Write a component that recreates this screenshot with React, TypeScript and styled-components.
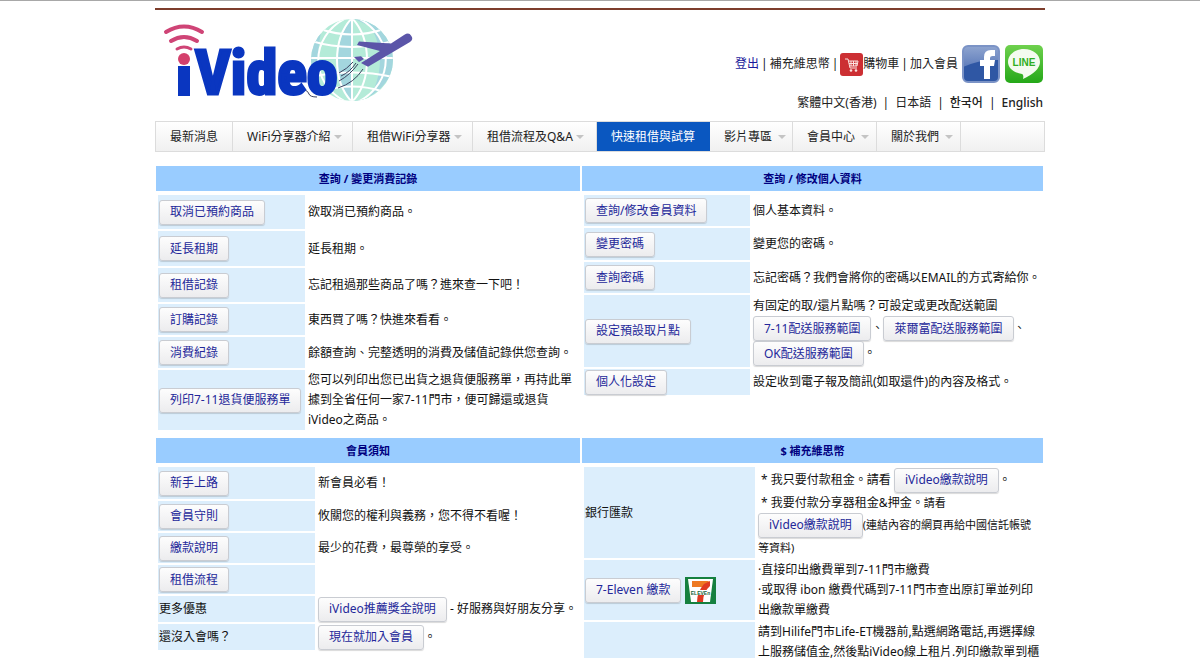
import React from "react";
import styled, { createGlobalStyle } from "styled-components";

const GlobalStyle = createGlobalStyle`
  * { box-sizing: border-box; }
  body {
    margin: 0;
    background: #fff;
    color: #111;
    font-family: "Noto Sans", "Noto Sans CJK TC", sans-serif;
    font-size: 12px;
    line-height: 20px;
  }
`;

const Page = styled.div`
  border-top: 1px solid #a8a8a8;
  padding-top: 7px;
`;

const Container = styled.div`
  max-width: 890px;
  margin: 0 auto;
`;

const Header = styled.header`
  display: flex;
  justify-content: space-between;
  border-top: 2px solid #7d3d2c;
  padding: 6px 2px 8px 5px;
`;

const LogoLink = styled.a`
  display: block;
  height: 90px;
`;

const LogoSvg = styled.svg`
  overflow: visible;
`;

const HeaderLinks = styled.div`
  display: flex;
  flex-direction: column;
  align-items: flex-end;
  gap: 10px;
  padding-top: 29px;
`;

const LinkLine = styled.div<{ $gap: number }>`
  display: flex;
  align-items: center;
  gap: ${(p) => p.$gap}px;
  line-height: 20px;
`;

const TopLink = styled.a<{ $accent?: boolean; $strong?: boolean }>`
  display: inline-flex;
  align-items: center;
  color: ${(p) => (p.$accent ? "#1a1a9c" : "#222")};
  font-weight: ${(p) => (p.$strong ? 500 : 400)};
  text-decoration: none;
`;

const Social = styled.div`
  display: flex;
  gap: 5px;
  height: 38px;
  margin-left: 2px;
`;

const Nav = styled.nav`
  display: flex;
  height: 31px;
  border: 1px solid #dcdcdc;
  background: linear-gradient(#fff, #f0f0f0);
`;

const NavItem = styled.a<{ $width: number; $active?: boolean }>`
  display: flex;
  align-items: center;
  flex: 0 1 ${(p) => p.$width}px;
  gap: 3px;
  padding-left: 14px;
  border-right: 1px solid ${(p) => (p.$active ? "#0a57c0" : "#dcdcdc")};
  background: ${(p) => (p.$active ? "#0a57c0" : "transparent")};
  color: ${(p) => (p.$active ? "#fff" : "#1c1c1c")};
  line-height: 28px;
  text-decoration: none;
  white-space: nowrap;
`;

const Caret = styled.span<{ $spaced?: boolean }>`
  border: 4px solid transparent;
  border-top-color: #c4c4c4;
  border-bottom: 0;
  margin-left: ${(p) => (p.$spaced ? 3 : 0)}px;
`;

const Panels = styled.main`
  display: grid;
  grid-template-columns: 424fr 461fr;
  gap: 6px 2px;
  padding: 14px 2px 0 1px;
`;

const PanelTitle = styled.h2`
  margin: 0 0 2px;
  height: 25px;
  background: #99ccff;
  color: #000080;
  font-size: 11px;
  font-weight: 700;
  line-height: 26px;
  text-align: center;
`;

const Table = styled.table`
  width: 100%;
  table-layout: fixed;
  border-collapse: separate;
  border-spacing: 2px;
`;

const LabelCol = styled.col<{ $width: number }>`
  width: ${(p) => p.$width}px;
`;

const Row = styled.tr<{ $height: number }>`
  height: ${(p) => p.$height}px;
`;

const LabelCell = styled.th`
  padding: 0 1px;
  background: #dceefc;
  font-weight: 400;
  text-align: left;
  vertical-align: middle;
`;

const TextCell = styled.td`
  padding: 0 1px;
  vertical-align: middle;
  white-space: nowrap;
`;

const Button = styled.button`
  height: 25px;
  padding: 0 10px;
  border: 1px solid #c9ccd2;
  border-radius: 3px;
  background: linear-gradient(#fdfdfd, #ececee);
  box-shadow: 0 1px 1px rgba(0, 0, 0, 0.15);
  color: #24289a;
  font: inherit;
  line-height: 22px;
  white-space: nowrap;
  vertical-align: middle;
`;

const Group = styled.div`
  display: flex;
  align-items: center;
  gap: 4px;
`;

const Small = styled.span`
  font-size: 11px;
`;

const Logo = () => (
  <LogoSvg width="256" height="90" viewBox="160 15 256 90" role="img" aria-label="iVideo">
    <defs>
      <clipPath id="globe">
        <circle cx="352" cy="59" r="41" />
      </clipPath>
    </defs>
    <g clipPath="url(#globe)">
      <rect x="310" y="17" width="84" height="84" fill="#b4ebd8" />
      <path d="M352 17C336 30 331 84 352 101ZM326 17C315 40 316 80 326 101H304V17ZM352 17C368 34 374 80 352 101C372 100 394 80 394 59S376 17 352 17Z" fill="#a3d6de" />
      <path d="M370 25C384 46 383 78 368 98L352 101C368 82 370 40 352 17Z" fill="#b4ebd8" />
      <g fill="none" stroke="#fff" strokeWidth="2">
        <path d="M352 17V101M352 17C332 38 332 80 352 101M352 17C372 38 372 80 352 101M346 17C309 36 309 82 346 101M358 17C395 36 395 82 358 101" />
        <path d="M308 57H396M311 40Q352 52 393 40M320 28Q352 39 384 28M311 76Q352 67 393 76M320 91Q352 80 384 91" />
      </g>
    </g>
    <path d="M411 34.500Q414 38 410 41L368 65.700L361 62L380 50L357 44L359 40.500L391 42.500L404 34Q409 31 411 34.500ZM354 56L361 55.300L364 58L359 61Z" fill="#5b55a8" />
    <g fill="none" stroke="#3b4260" strokeWidth="1">
      <path d="M339 72Q347 68 353 61M339 80Q350 74 358 63M338 87Q354 82 363 68M341 75Q350 71 356 62M305 89Q308 90 309 93T317 96" />
    </g>
    <g fill="none" stroke="#cf4476" strokeLinecap="round">
      <path d="M166 31Q184 20 202 31" strokeWidth="4" />
      <path d="M171 40Q184 32 197 40" strokeWidth="4" />
      <path d="M177 48Q184 44 191 48" strokeWidth="3" />
    </g>
    <circle cx="184" cy="58" r="6" fill="#d4416c" />
    <path d="M178 65H190V95H178Z" fill="#0a36c0" />
    <text
      x="195"
      y="93"
      fontFamily='"Liberation Sans Narrow", "Roboto Condensed", sans-serif'
      fontWeight="700"
      fontSize="62"
      fill="#0a36c0"
      stroke="#0a36c0"
      strokeWidth="3"
    >
      Video
    </text>
  </LogoSvg>
);

const CartIcon = () => (
  <svg width="23" height="23" viewBox="0 0 23 23" aria-hidden="true">
    <rect width="23" height="23" rx="3" fill="#cc2f33" />
    <path d="M5 6H8L10 15H17M8.500 8H18L17 13H9.500M11 8V13M13.500 8V13M16 8V13M9 10.500H17.500" fill="none" stroke="#fbe3df" />
    <circle cx="11" cy="17.500" r="1.300" fill="#fbe3df" />
    <circle cx="16" cy="17.500" r="1.300" fill="#fbe3df" />
  </svg>
);

const FacebookIcon = () => (
  <svg width="38" height="38" viewBox="0 0 38 38" role="img" aria-label="Facebook">
    <defs>
      <linearGradient id="fb" x1="0" y1="0" x2="0" y2="1">
        <stop offset="0" stopColor="#8fa5d0" />
        <stop offset="1" stopColor="#5f7dbb" />
      </linearGradient>
    </defs>
    <rect x="1" y="1" width="36" height="36" rx="5" fill="#2f57a4" />
    <path d="M1 6Q1 1 6 1H32Q37 1 37 6V15Q18 14 1 22Z" fill="url(#fb)" />
    <rect x="1" y="1" width="36" height="36" rx="5" fill="none" stroke="#7b93c6" strokeWidth="2" />
    <path d="M22 34V21H18V15H22V12Q22 5 29 5H33V11H30.500Q28 11 28 13V15H33L32 21H28V34Z" fill="#fff" />
  </svg>
);

const LineIcon = () => (
  <svg width="38" height="38" viewBox="0 0 38 38" role="img" aria-label="LINE">
    <defs>
      <linearGradient id="line" x1="0" y1="0" x2="0" y2="1">
        <stop offset="0" stopColor="#6fd14e" />
        <stop offset="1" stopColor="#25a818" />
      </linearGradient>
    </defs>
    <rect width="38" height="38" rx="5" fill="url(#line)" />
    <path d="M19 4C10 4 3 9.500 3 17C3 23 9 28 17 29Q19 29.500 18 34Q35 26 35 17C35 9.500 28 4 19 4Z" fill="#f4fbef" />
    <text x="19" y="21" textAnchor="middle" fontFamily='"Liberation Sans", sans-serif' fontWeight="700" fontSize="10" fill="#2fae22">
      LINE
    </text>
  </svg>
);

const SevenElevenLogo = () => (
  <svg width="31" height="27" viewBox="0 0 31 27" role="img" aria-label="7-Eleven">
    <rect width="31" height="27" fill="#15803f" />
    <path d="M3 2H28L25 25H6Z" fill="#fff" />
    <path d="M7 4H24L20 10H7Z" fill="#ee7a24" />
    <path d="M19 7L25 4V9Q18 15 18 25H12Q12 15 19 7Z" fill="#df3a22" />
    <rect x="5" y="13" width="21" height="5" fill="#fff" />
    <text x="15.500" y="17.500" textAnchor="middle" fontFamily='"Liberation Sans", sans-serif' fontWeight="700" fontSize="5" fill="#14663a">
      ELEVEn
    </text>
  </svg>
);

type NavEntry = { label: string; width: number; caret?: "tight" | "spaced"; active?: boolean };

const navItems: NavEntry[] = [
  { label: "最新消息", width: 77 },
  { label: "WiFi分享器介紹", width: 120, caret: "tight" },
  { label: "租借WiFi分享器", width: 120, caret: "tight" },
  { label: "租借流程及Q&A", width: 124, caret: "tight" },
  { label: "快速租借與試算", width: 113, active: true },
  { label: "影片專區", width: 83, caret: "spaced" },
  { label: "會員中心", width: 84, caret: "spaced" },
  { label: "關於我們", width: 84, caret: "spaced" },
];

type RowEntry = { height: number; label: React.ReactNode; text?: React.ReactNode };

const Panel = ({ title, labelWidth, rows }: { title: string; labelWidth: number; rows: RowEntry[] }) => (
  <section>
    <PanelTitle>{title}</PanelTitle>
    <Table>
      <colgroup>
        <LabelCol $width={labelWidth} />
        <col />
      </colgroup>
      <tbody>
        {rows.map((row, i) => (
          <Row key={i} $height={row.height}>
            <LabelCell scope="row">{row.label}</LabelCell>
            <TextCell>{row.text}</TextCell>
          </Row>
        ))}
      </tbody>
    </Table>
  </section>
);

const spendingRows: RowEntry[] = [
  { height: 34, label: <Button>取消已預約商品</Button>, text: "欲取消已預約商品。" },
  { height: 35, label: <Button>延長租期</Button>, text: "延長租期。" },
  { height: 34, label: <Button>租借記錄</Button>, text: "忘記租過那些商品了嗎？進來查一下吧！" },
  { height: 31, label: <Button>訂購記錄</Button>, text: "東西買了嗎？快進來看看。" },
  { height: 31, label: <Button>消費紀錄</Button>, text: "餘額查詢、完整透明的消費及儲值記錄供您查詢。" },
  {
    height: 60,
    label: <Button>列印7-11退貨便服務單</Button>,
    text: (
      <>
        您可以列印出您已出貨之退貨便服務單，再持此單
        <br />
        據到全省任何一家7-11門市，便可歸還或退貨
        <br />
        iVideo之商品。
      </>
    ),
  },
];

const profileRows: RowEntry[] = [
  { height: 31, label: <Button>查詢/修改會員資料</Button>, text: "個人基本資料。" },
  { height: 32, label: <Button>變更密碼</Button>, text: "變更您的密碼。" },
  { height: 31, label: <Button>查詢密碼</Button>, text: "忘記密碼？我們會將你的密碼以EMAIL的方式寄給你。" },
  {
    height: 72,
    label: <Button>設定預設取片點</Button>,
    text: (
      <>
        有固定的取/還片點嗎？可設定或更改配送範圍
        <br />
        <Button>7-11配送服務範圍</Button>、<Button>萊爾富配送服務範圍</Button>、
        <br />
        <Button>OK配送服務範圍</Button>。
      </>
    ),
  },
  { height: 26, label: <Button>個人化設定</Button>, text: "設定收到電子報及簡訊(如取還件)的內容及格式。" },
];

const memberRows: RowEntry[] = [
  { height: 32, label: <Button>新手上路</Button>, text: "新會員必看！" },
  { height: 30, label: <Button>會員守則</Button>, text: "攸關您的權利與義務，您不得不看喔！" },
  { height: 30, label: <Button>繳款說明</Button>, text: "最少的花費，最尊榮的享受。" },
  { height: 29, label: <Button>租借流程</Button> },
  {
    height: 26,
    label: "更多優惠",
    text: (
      <>
        <Button>iVideo推薦獎金說明</Button> - 好服務與好朋友分享。
      </>
    ),
  },
  {
    height: 26,
    label: "還沒入會嗎？",
    text: (
      <>
        <Button>現在就加入會員</Button>。
      </>
    ),
  },
];

const paymentRows: RowEntry[] = [
  {
    height: 91,
    label: "銀行匯款",
    text: (
      <>
        &nbsp;* 我只要付款租金。請看 <Button>iVideo繳款說明</Button>。
        <br />
        &nbsp;* 我要付款分享器租金&amp;押金。<Small>請看</Small>
        <br />
        <Button>iVideo繳款說明</Button>
        <Small>
          (連結內容的網頁再給中國信託帳號
          <br />
          等資料)
        </Small>
      </>
    ),
  },
  {
    height: 60,
    label: (
      <Group>
        <Button>7-Eleven 繳款</Button>
        <SevenElevenLogo />
      </Group>
    ),
    text: (
      <>
        ·直接印出繳費單到7-11門市繳費
        <br />
        ·或取得 ibon 繳費代碼到7-11門市查出原訂單並列印
        <br />
        出繳款單繳費
      </>
    ),
  },
  {
    height: 40,
    label: "",
    text: (
      <>
        請到Hilife門市Life-ET機器前,點選網路電話,再選擇線
        <br />
        上服務儲值金,然後點iVideo線上租片.列印繳款單到櫃
      </>
    ),
  },
];

export default function App() {
  return (
    <Page>
      <GlobalStyle />
      <Container>
        <Header>
          <LogoLink href="#">
            <Logo />
          </LogoLink>
          <HeaderLinks>
            <LinkLine $gap={2}>
              <TopLink href="#" $accent>登出</TopLink>|
              <TopLink href="#">補充維思幣</TopLink>|
              <TopLink href="#">
                <CartIcon />
                購物車
              </TopLink>
              |<TopLink href="#">加入會員</TopLink>
              <Social>
                <a href="#"><FacebookIcon /></a>
                <a href="#"><LineIcon /></a>
              </Social>
            </LinkLine>
            <LinkLine $gap={6}>
              <TopLink href="#">繁體中文(香港)</TopLink>|
              <TopLink href="#">日本語</TopLink>|
              <TopLink href="#" $strong>한국어</TopLink>|
              <TopLink href="#" $strong>English</TopLink>
            </LinkLine>
          </HeaderLinks>
        </Header>
        <Nav>
          {navItems.map((item) => (
            <NavItem key={item.label} href="#" $width={item.width} $active={item.active}>
              {item.label}
              {item.caret && <Caret $spaced={item.caret === "spaced"} />}
            </NavItem>
          ))}
        </Nav>
        <Panels>
          <Panel title="查詢 / 變更消費記錄" labelWidth={147} rows={spendingRows} />
          <Panel title="查詢 / 修改個人資料" labelWidth={166} rows={profileRows} />
          <Panel title="會員須知" labelWidth={157} rows={memberRows} />
          <Panel title="$ 補充維思幣" labelWidth={171} rows={paymentRows} />
        </Panels>
      </Container>
    </Page>
  );
}
